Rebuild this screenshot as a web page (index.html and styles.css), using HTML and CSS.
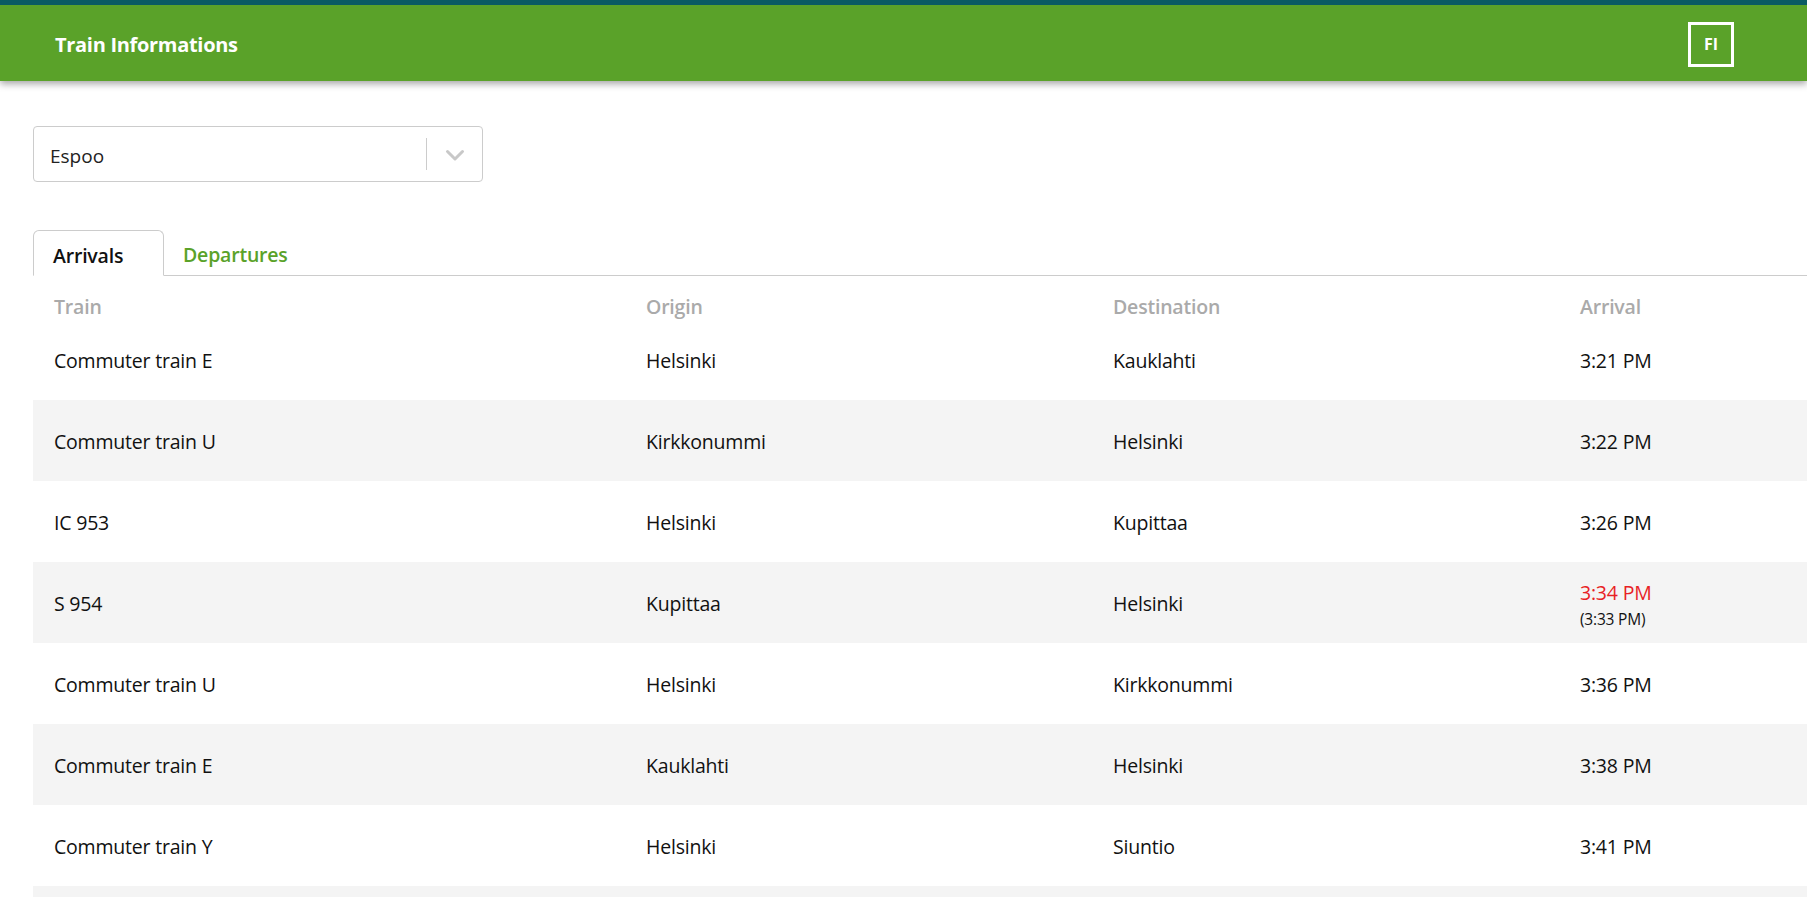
FILE: index.html
```html
<!DOCTYPE html>
<html lang="en">
<head>
<meta charset="utf-8">
<title>Train Informations</title>
<link rel="stylesheet" href="styles.css">
</head>
<body>
<header class="topbar">
  <div class="brand">Train Informations</div>
  <button class="lang">FI</button>
</header>
<main class="content">
  <div class="select">
    <div class="select-value">Espoo</div>
    <div class="select-sep"></div>
    <div class="select-arrow">
      <svg width="22" height="22" viewBox="0 0 22 22"><path d="M3.5 7.5 L11 15 L18.5 7.5" fill="none" stroke="#c8c8c8" stroke-width="3" stroke-linecap="round" stroke-linejoin="round"/></svg>
    </div>
  </div>
  <nav class="tabs">
    <div class="tab active">Arrivals</div>
    <div class="tab">Departures</div>
    <div class="tab-fill"></div>
  </nav>
  <div class="table">
    <div class="row head">
      <div class="cell">Train</div><div class="cell">Origin</div><div class="cell">Destination</div><div class="cell">Arrival</div>
    </div>
    <div class="row">
      <div class="cell">Commuter train E</div><div class="cell">Helsinki</div><div class="cell">Kauklahti</div><div class="cell">3:21 PM</div>
    </div>
    <div class="row alt">
      <div class="cell">Commuter train U</div><div class="cell">Kirkkonummi</div><div class="cell">Helsinki</div><div class="cell">3:22 PM</div>
    </div>
    <div class="row">
      <div class="cell">IC 953</div><div class="cell">Helsinki</div><div class="cell">Kupittaa</div><div class="cell">3:26 PM</div>
    </div>
    <div class="row alt">
      <div class="cell">S 954</div><div class="cell">Kupittaa</div><div class="cell">Helsinki</div><div class="cell time"><span class="late">3:34 PM</span><span class="sched">(3:33 PM)</span></div>
    </div>
    <div class="row">
      <div class="cell">Commuter train U</div><div class="cell">Helsinki</div><div class="cell">Kirkkonummi</div><div class="cell">3:36 PM</div>
    </div>
    <div class="row alt">
      <div class="cell">Commuter train E</div><div class="cell">Kauklahti</div><div class="cell">Helsinki</div><div class="cell">3:38 PM</div>
    </div>
    <div class="row">
      <div class="cell">Commuter train Y</div><div class="cell">Helsinki</div><div class="cell">Siuntio</div><div class="cell">3:41 PM</div>
    </div>
    <div class="row alt" aria-hidden="true">
      <div class="cell"></div><div class="cell"></div><div class="cell"></div><div class="cell"></div>
    </div>
  </div>
</main>
</body>
</html>
```
FILE: styles.css
```css
* { box-sizing: border-box; }
html, body { margin: 0; padding: 0; }
body {
  font-family: "Open Sans", "Noto Sans", sans-serif;
  color: #111;
  background: #fff;
  overflow: hidden;
}
.topbar {
  height: 81px;
  border-top: 5px solid #0a5b63;
  background: #5aa229;
  display: flex;
  align-items: center;
  justify-content: space-between;
  padding: 0 73px 0 55px;
  box-shadow: 0 3px 7px rgba(0,0,0,0.35);
  position: relative;
  z-index: 2;
}
.brand {
  color: #fff;
  font-weight: 700;
  font-size: 20px;
  letter-spacing: -0.3px;
  padding-top: 3px;
}
.lang {
  width: 46px;
  height: 45px;
  border: 3px solid #fff;
  background: transparent;
  color: #fff;
  font-family: inherit;
  font-weight: 700;
  font-size: 16px;
  padding: 0;
  margin-top: 2px;
}
.content {
  padding: 45px 0 0 33px;
}
.select {
  width: 450px;
  height: 56px;
  border: 1px solid #cccccc;
  border-radius: 4px;
  display: flex;
  align-items: center;
}
.select-value {
  flex: 1;
  padding: 3px 0 0 16px;
  font-size: 19px;
  color: #222;
}
.select-sep {
  width: 1px;
  height: 32px;
  background: #cccccc;
}
.select-arrow {
  width: 55px;
  display: flex;
  justify-content: center;
  align-items: center;
  padding-top: 2px;
}
.tabs {
  margin-top: 48px;
  display: flex;
  align-items: stretch;
  height: 46px;
}
.tab {
  padding: 4px 19px 0;
  font-size: 19.5px;
  font-weight: 600;
  color: #5aa229;
  display: flex;
  align-items: center;
  border-bottom: 1px solid #cccccc;
  letter-spacing: -0.2px;
}
.tab.active {
  width: 131px;
  color: #111;
  border: 1px solid #cccccc;
  border-bottom-color: #fff;
  border-radius: 6px 6px 0 0;
}
.tab-fill {
  flex: 1;
  border-bottom: 1px solid #cccccc;
}
.row {
  display: grid;
  grid-template-columns: 592px 467px 467px 1fr;
  height: 81px;
  align-items: center;
  padding: 2px 0 0 21px;
  font-size: 19.5px;
  letter-spacing: -0.2px;
}
.row.head {
  height: 43px;
  padding-top: 0;
  align-items: end;
  line-height: 24px;
  color: #aaaaaa;
  font-weight: 600;
}
.row.alt { background: #f4f4f4; }
.cell.time {
  display: flex;
  flex-direction: column;
  padding-top: 3px;
}
.late { color: #e81f25; line-height: 24px; }
.sched { font-size: 15.5px; line-height: 20px; margin-top: 4px; color: #111; }
```
